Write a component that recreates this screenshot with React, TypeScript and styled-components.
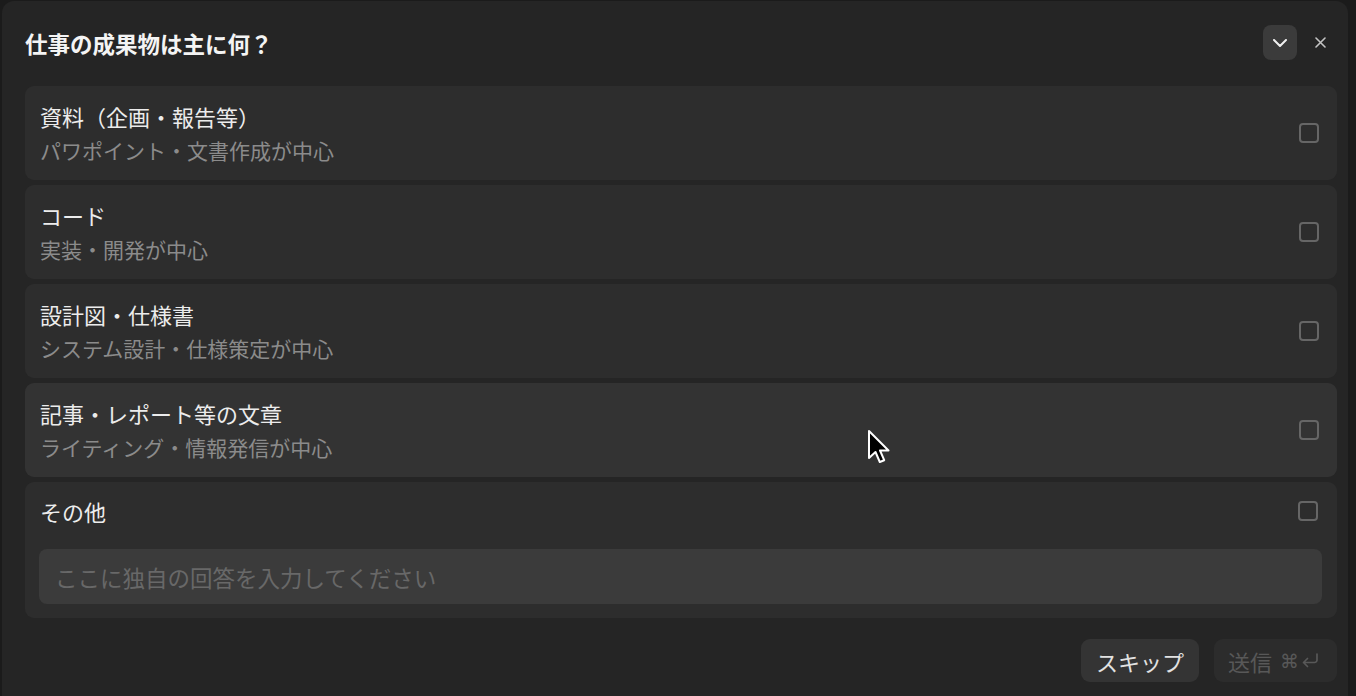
import React from "react";
import styled, { createGlobalStyle } from "styled-components";

const GlobalStyle = createGlobalStyle`
  html, body {
    margin: 0;
    padding: 0;
    background: #1b1b1b;
  }
  body {
    font-family: "Noto Sans CJK JP", "Noto Sans", "Liberation Sans", sans-serif;
    -webkit-font-smoothing: antialiased;
  }
  * { box-sizing: border-box; }
`;

const Frame = styled.div`
  position: relative;
  width: 1356px;
  height: 696px;
  overflow: hidden;
  padding: 1px 8px 0 2px;
`;

const Panel = styled.div`
  background: #252525;
  border-radius: 12px;
  height: 730px;
  padding: 0 11px 0 23px;
  display: flex;
  flex-direction: column;
`;

const Header = styled.div`
  height: 85px;
  display: flex;
  align-items: center;
  padding-right: 5px;
  padding-bottom: 2px;
`;

const Title = styled.h1`
  margin: 0;
  flex: 1;
  font-size: 22.5px;
  font-weight: 700;
  color: #f4f4f4;
`;

const CollapseButton = styled.button`
  width: 34px;
  height: 35px;
  border: none;
  border-radius: 8px;
  background: #3b3b3b;
  display: flex;
  align-items: center;
  justify-content: center;
  padding: 0;
  margin-right: 11px;
`;

const CloseButton = styled.button`
  width: 24px;
  height: 24px;
  border: none;
  background: transparent;
  display: flex;
  align-items: center;
  justify-content: center;
  padding: 0;
`;

const List = styled.div`
  display: flex;
  flex-direction: column;
  gap: 5px;
`;

const Option = styled.div<{ $hover?: boolean }>`
  height: 94px;
  border-radius: 9px;
  background: ${(p) => (p.$hover ? "#333333" : "#2d2d2d")};
  display: flex;
  align-items: center;
  padding: 0 18px 0 15px;
`;

const OptionText = styled.div`
  flex: 1;
  display: flex;
  flex-direction: column;
`;

const Label = styled.div`
  font-size: 22px;
  line-height: 34px;
  color: #ececec;
`;

const Sub = styled.div`
  font-size: 21px;
  line-height: 34px;
  color: #8b8b8b;
`;

const Check = styled.span`
  width: 20px;
  height: 20px;
  border: 2px solid #666666;
  border-radius: 4px;
  flex-shrink: 0;
`;

const OtherCard = styled.div`
  border-radius: 9px;
  background: #2d2d2d;
  padding: 12px 15px 14px 14px;
  display: flex;
  flex-direction: column;
  gap: 21px;
`;

const OtherHead = styled.div`
  display: flex;
  align-items: center;
  padding-left: 1px;
  padding-right: 4px;
`;

const Input = styled.input`
  height: 55px;
  border: none;
  outline: none;
  border-radius: 8px;
  background: #3b3b3b;
  padding: 0 16px;
  font-family: inherit;
  font-size: 22.5px;
  color: #ececec;
  &::placeholder {
    color: #686868;
  }
`;

const Footer = styled.div`
  display: flex;
  justify-content: flex-end;
  gap: 15px;
  padding-top: 21px;
`;

const SkipButton = styled.button`
  height: 43px;
  border: none;
  border-radius: 9px;
  background: #343434;
  color: #e2e2e2;
  font-family: inherit;
  font-size: 22px;
  padding: 0 15px;
  display: flex;
  align-items: center;
`;

const SendButton = styled.button`
  height: 43px;
  border: none;
  border-radius: 9px;
  background: #2c2c2c;
  color: #585858;
  font-family: inherit;
  font-size: 22px;
  padding: 0 17px 0 14px;
  display: flex;
  align-items: center;
  gap: 8px;
`;

const Shortcut = styled.span`
  display: flex;
  align-items: center;
  gap: 1px;
  font-family: "DejaVu Sans", sans-serif;
  font-size: 19px;
  color: #585858;
`;

const Cursor = styled.svg`
  position: absolute;
  left: 866px;
  top: 428px;
  pointer-events: none;
`;

const options = [
  { label: "資料（企画・報告等）", sub: "パワポイント・文書作成が中心" },
  { label: "コード", sub: "実装・開発が中心" },
  { label: "設計図・仕様書", sub: "システム設計・仕様策定が中心" },
  { label: "記事・レポート等の文章", sub: "ライティング・情報発信が中心", hover: true },
];

export default function App() {
  return (
    <>
      <GlobalStyle />
      <Frame>
        <Panel>
          <Header>
            <Title>仕事の成果物は主に何？</Title>
            <CollapseButton aria-label="collapse">
              <svg width="14" height="8" viewBox="0 0 14 8">
                <path d="M1 1 L7 7 L13 1" fill="none" stroke="#f0f0f0" strokeWidth="2" strokeLinecap="round" strokeLinejoin="round" />
              </svg>
            </CollapseButton>
            <CloseButton aria-label="close">
              <svg width="11" height="11" viewBox="0 0 11 11">
                <path d="M1 1 L10 10 M10 1 L1 10" stroke="#c4c4c4" strokeWidth="1.6" strokeLinecap="round" />
              </svg>
            </CloseButton>
          </Header>
          <List>
            {options.map((o) => (
              <Option key={o.label} $hover={o.hover}>
                <OptionText>
                  <Label>{o.label}</Label>
                  <Sub>{o.sub}</Sub>
                </OptionText>
                <Check />
              </Option>
            ))}
            <OtherCard>
              <OtherHead>
                <OptionText>
                  <Label>その他</Label>
                </OptionText>
                <Check />
              </OtherHead>
              <Input placeholder="ここに独自の回答を入力してください" />
            </OtherCard>
          </List>
          <Footer>
            <SkipButton>スキップ</SkipButton>
            <SendButton>
              送信
              <Shortcut>
                ⌘
                <svg width="20" height="17" viewBox="0 0 20 17">
                  <path d="M17 2 V8 A2.5 2.5 0 0 1 14.5 10.5 H3.5 M7.5 6.5 L3.5 10.5 L7.5 14.5" fill="none" stroke="#585858" strokeWidth="1.7" strokeLinecap="round" strokeLinejoin="round" />
                </svg>
              </Shortcut>
            </SendButton>
          </Footer>
        </Panel>
        <Cursor width="26" height="38" viewBox="0 0 26 38">
          <path d="M3 3 L3 30 L9.5 24 L13.8 34 L18.2 32.2 L14 22.5 L22.5 22.5 Z" fill="#000" stroke="#fff" strokeWidth="2" strokeLinejoin="round" />
        </Cursor>
      </Frame>
    </>
  );
}
